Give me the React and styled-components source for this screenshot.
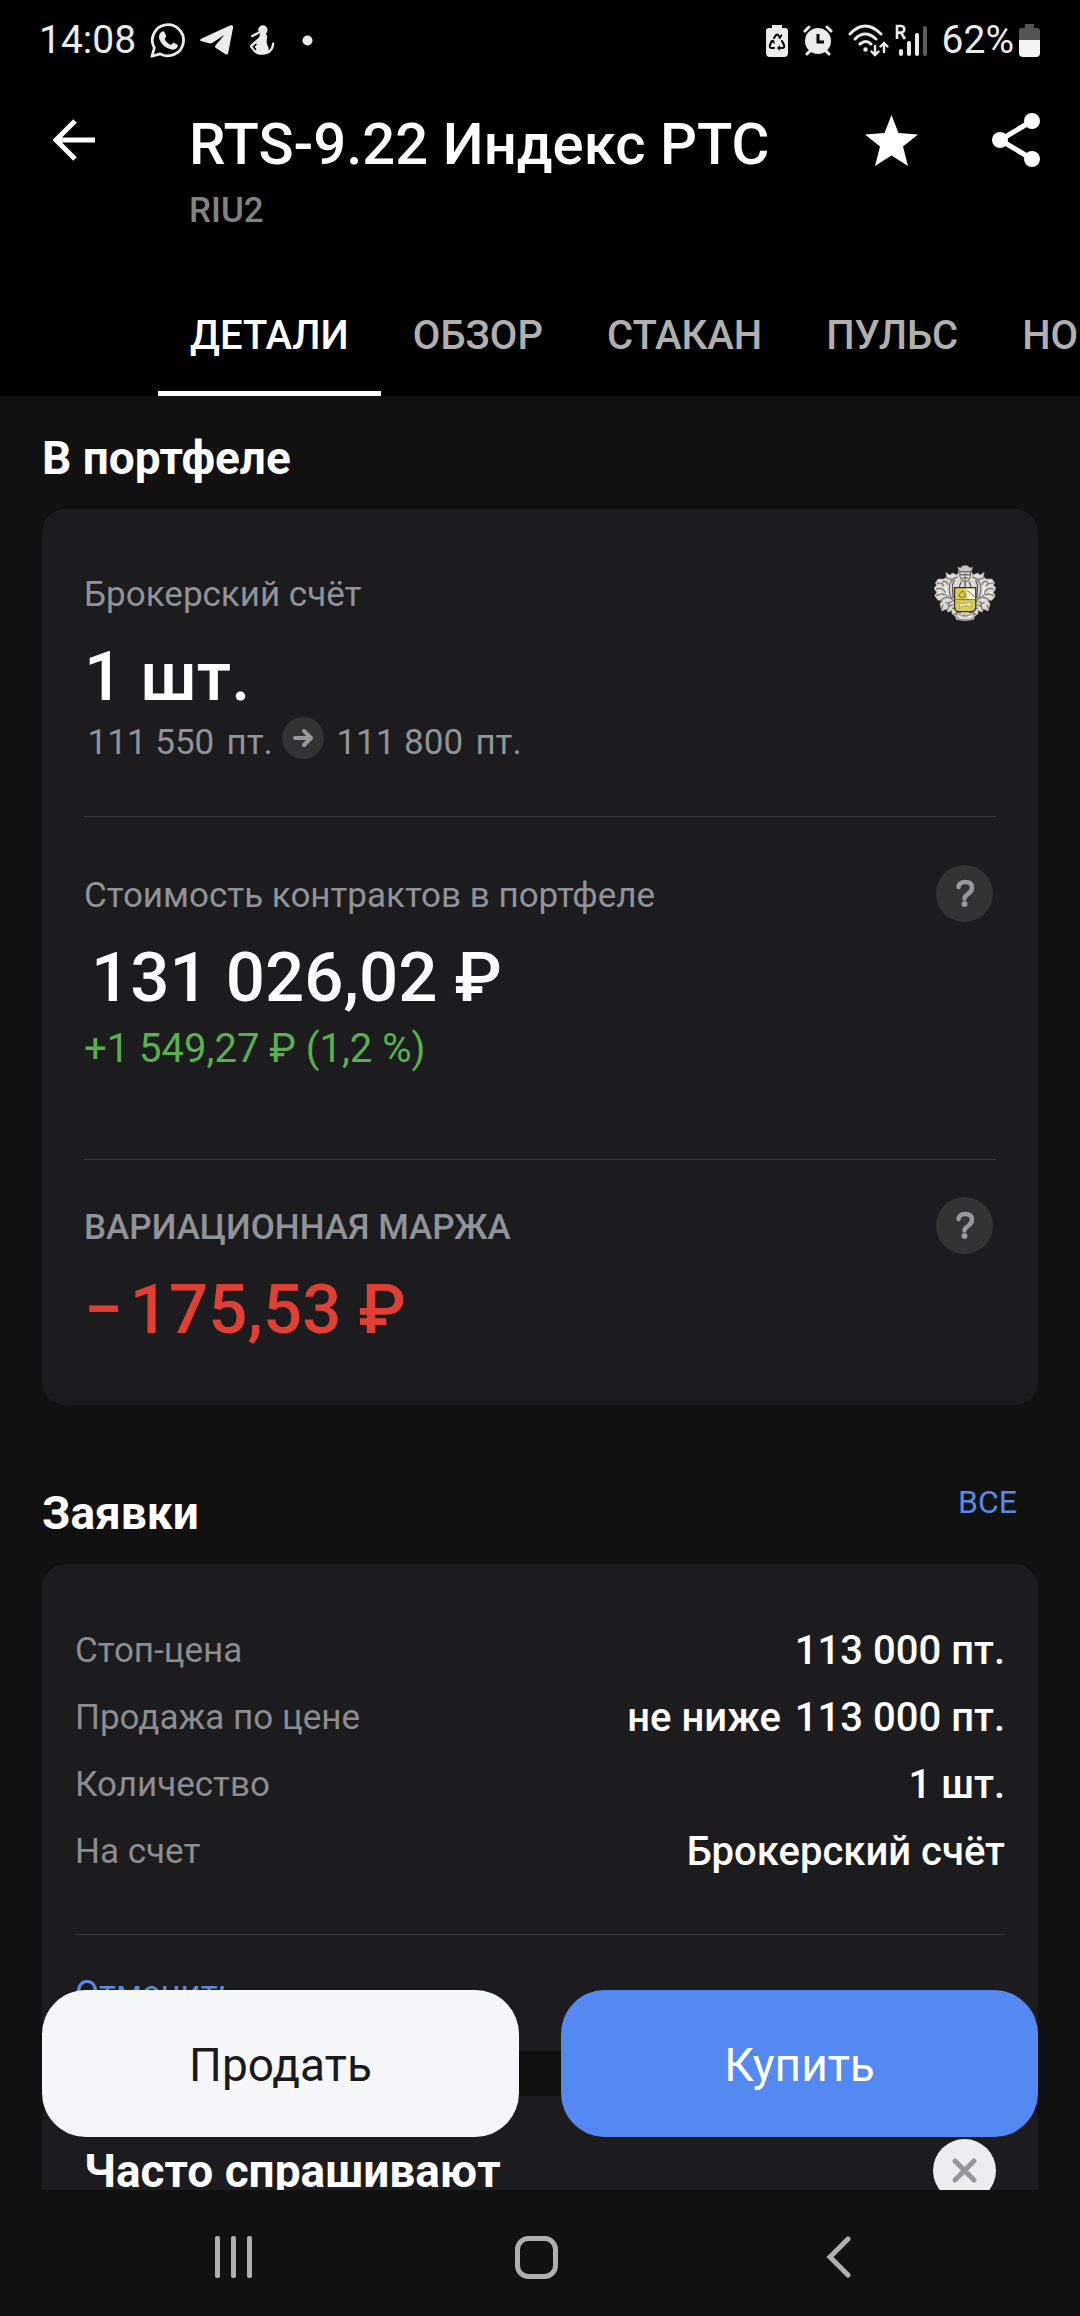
import styled, { createGlobalStyle } from "styled-components";

const GlobalStyle = createGlobalStyle`
    * {
        box-sizing: border-box;
    }
    body {
        margin: 0;
        background-color: #111111;
        color: #ffffff;
        font-family: Roboto, "Noto Sans", sans-serif;
    }
    button {
        margin: 0;
        padding: 0;
        border: none;
        background: none;
        color: inherit;
        font: inherit;
        cursor: pointer;
    }
    h1, h2, p, dl, dt, dd {
        margin: 0;
    }
    svg {
        display: block;
        flex: none;
    }
`;

const Screen = styled.div`
    height: 100vh;
    display: flex;
    flex-direction: column;
`;

/* Header */

const Header = styled.header`
    background-color: #000000;
`;
const StatusBar = styled.div`
    height: 80px;
    padding: 0 39px;
    display: flex;
    align-items: center;
    justify-content: space-between;
    color: #ececec;
    font-size: 39px;
    line-height: 48px;
`;
const StatusGroup = styled.div`
    display: flex;
    align-items: center;
    gap: ${(props) => props.$gap}px;
`;
const AppBar = styled.div`
    display: flex;
    align-items: flex-start;
    padding: 31px 35px 42px 45px;
`;
const IconButton = styled.button`
    width: 58px;
    height: 58px;
    display: flex;
    align-items: center;
    justify-content: center;
`;
const Heading = styled.div`
    flex: 1;
    min-width: 0;
    margin-left: 86px;
`;
const Title = styled.h1`
    font-size: 58px;
    line-height: 66px;
    font-weight: 500;
    white-space: nowrap;
`;
const Ticker = styled.p`
    margin-top: 13px;
    color: #828282;
    font-size: 35px;
    line-height: 42px;
    font-weight: 500;
`;
const Actions = styled.div`
    display: flex;
    gap: 67px;
`;
const Tabs = styled.nav`
    display: flex;
    padding-left: 158px;
    overflow: hidden;
`;
const Tab = styled.button`
    flex: none;
    height: 122px;
    && {
        padding: 2px 32px 0;
        color: ${(props) => (props.$active ? "#ffffff" : "#b0b0b0")};
        font-size: 40px;
        line-height: 48px;
        font-weight: 500;
    }
    box-shadow: ${(props) => (props.$active ? "inset 0 -5px #ffffff" : "none")};
`;

/* Content */

const Body = styled.div`
    position: relative;
    flex: 1;
    min-height: 0;
`;
const Scroll = styled.main`
    height: 100%;
    padding: 35px 42px 0;
    overflow-y: auto;
    scrollbar-width: none;
`;
const SectionHead = styled.div`
    display: flex;
    align-items: flex-start;
    justify-content: space-between;
    margin-bottom: 24px;
`;
const SectionTitle = styled.h2`
    font-size: 46px;
    line-height: 54px;
    font-weight: 700;
`;
const AllLink = styled.a`
    padding: 0 21px;
    color: #5b8ae6;
    font-size: 32px;
    line-height: 32px;
    text-decoration: none;
`;
const Card = styled.section`
    border-radius: 24px;
    background-color: #1c1c1e;
`;
const PortfolioCard = styled(Card)`
    padding: 55px 42px;
    margin-bottom: 81px;
`;
const LabelRow = styled.div`
    height: 57px;
    display: flex;
    align-items: flex-end;
    justify-content: space-between;
    margin-bottom: 16px;
`;
const Label = styled.span`
    color: #909399;
    font-size: 35px;
    line-height: 52px;
    font-weight: ${(props) => (props.$medium ? 500 : 400)};
`;
const HelpButton = styled.button`
    && {
        width: 57px;
        height: 57px;
        border-radius: 50%;
        background-color: #333333;
        color: #96999e;
    }
    margin-right: 3px;
`;
const Value = styled.p`
    color: ${(props) => props.$color || "#ffffff"};
    font-size: 69px;
    line-height: 80px;
    font-weight: 500;
`;
const Prices = styled.div`
    display: flex;
    align-items: flex-end;
    gap: 9px;
    color: #909399;
    font-size: 35px;
    line-height: 32px;
`;
const Gain = styled.p`
    color: #5ab04f;
    font-size: 40px;
    line-height: 62px;
`;
const Divider = styled.hr`
    height: 1px;
    margin: ${(props) => props.$top}px 0 ${(props) => props.$bottom}px;
    border: none;
    background-color: #363638;
`;
const OrderCard = styled(Card)`
    padding: 53px 33px 36px;
    margin-bottom: 45px;
`;
const OrderRow = styled.div`
    display: flex;
    justify-content: space-between;
    line-height: 67px;
    white-space: nowrap;
`;
const OrderName = styled.dt`
    color: #8c8d90;
    font-size: 35px;
`;
const OrderValue = styled.dd`
    font-size: 40px;
    font-weight: 500;
`;
const CancelButton = styled.button`
    && {
        display: block;
        color: #5b8ae6;
        font-size: 35px;
        line-height: 42px;
    }
`;
const FaqCard = styled(Card)`
    display: flex;
    align-items: center;
    justify-content: space-between;
    padding: 43px 42px;
`;
const CloseButton = styled.button`
    && {
        width: 63px;
        height: 63px;
        border-radius: 50%;
        background-color: #ecedef;
        color: #93979c;
    }
`;

/* Trade buttons float over the scrolling list */

const TradeBar = styled.div`
    position: absolute;
    left: 42px;
    right: 42px;
    bottom: 53px;
    display: flex;
    gap: 42px;
`;
const TradeButton = styled.button`
    && {
        flex: 1;
        height: 147px;
        padding-top: 2px;
        border-radius: 44px;
        background-color: ${(props) => (props.$primary ? "#5589f2" : "#f6f7f8")};
        color: ${(props) => (props.$primary ? "#ffffff" : "#1a1a1a")};
        font-size: 46px;
        line-height: 54px;
    }
`;

const SystemNav = styled.nav`
    height: 126px;
    padding: 8px 90px 0 82px;
    display: flex;
    color: #b0b0b0;
`;
const SystemButton = styled.button`
    && {
        flex: 1;
        display: flex;
        align-items: center;
        justify-content: center;
    }
`;

/* Icons */

const WhatsAppIcon = () => (
    <svg width="35" height="36" viewBox="0 0 100 104" fill="none">
        <path d="M5 99 L12 75 A45 45 0 1 1 29 92 Z" stroke="currentColor" strokeWidth="8" strokeLinejoin="round" />
        <path d="M33 28c3-2 6-2 8 1l5 11c1 3-4 7-4 9 3 8 10 14 18 17 2 0 5-6 8-6l10 5c3 1 2 6 0 9-5 6-12 7-19 5-16-4-29-17-33-31-2-7 1-16 7-20z" fill="currentColor" />
    </svg>
);

const TelegramIcon = () => (
    <svg width="35" height="30" viewBox="0 0 100 90" fill="currentColor">
        <path d="M100 6 85 84q-2 6-8 4L47 68q-3-4 1-8L74 29 38 53q-5 3-10 2L3 48q-5-3 1-7L92 1q8-2 8 5z" />
    </svg>
);

const BuddyIcon = () => (
    <svg width="27" height="30" viewBox="0 0 78 90" fill="none">
        <circle cx="43" cy="15" r="14" fill="currentColor" />
        <path d="M34 26c0 6-1 11-7 15L8 58c-6 6-4 8 0 12 6 10 14 18 24 19h16c12-3 16-14 10-26-5-10-4-18-2-24 1-5-1-9-4-13z" fill="currentColor" />
        <path d="M29 24 11 33M54 84c12-4 19-13 20-28" stroke="currentColor" strokeWidth="7" strokeLinecap="round" />
        <path d="m24 57-9 8 7 9" stroke="#000000" strokeWidth="5" />
    </svg>
);

const DotIcon = () => (
    <svg width="11" height="11" viewBox="0 0 11 11">
        <circle cx="5.5" cy="5.5" r="5" fill="currentColor" />
    </svg>
);

const BatterySaverIcon = () => (
    <svg width="22" height="33" viewBox="0 0 22 33">
        <path d="M6 1h10v3h3a3 3 0 0 1 3 3v22a4 4 0 0 1-4 4H4a4 4 0 0 1-4-4V7a3 3 0 0 1 3-3h3z" fill="currentColor" />
        <path d="M8 14l2-3q1-1 2 0l2 3M6 17l-2 4q-1 3 2 3h2M16 17l2 4q1 3-2 3h-3" fill="none" stroke="#000000" strokeWidth="2" strokeLinecap="round" />
        <path d="M12 13h4v-3zM4 17l4-1 1 4zM14 21v6l-3-3z" fill="#000000" />
    </svg>
);

const AlarmIcon = () => (
    <svg width="30" height="31" viewBox="0 0 30 31" fill="none" stroke="currentColor" strokeLinecap="round">
        <circle cx="15" cy="16" r="13" fill="currentColor" stroke="none" />
        <path d="m2 6 4-4M28 6l-4-4" strokeWidth="3" />
        <path d="m7 26-3 3M23 26l3 3" strokeWidth="3" />
        <path d="M15 9v8h6" stroke="#000000" strokeWidth="3" strokeLinecap="butt" />
    </svg>
);

const WifiIcon = () => (
    <svg width="42" height="33" viewBox="0 0 42 33" fill="none" stroke="currentColor" strokeWidth="3" strokeLinecap="round">
        <path d="M2 10Q17-6 33 10M7 15q10-10 21 0M12 20q6-5 11 0" />
        <circle cx="17.5" cy="25.5" r="2.2" fill="currentColor" stroke="none" />
        <path d="M27 22v9M23.500 27.500 27 31l3.500-3.500M36 28v-9M32.500 22.500 36 19l3.500 3.500" strokeWidth="2.400" />
    </svg>
);

const SignalIcon = () => (
    <svg width="32" height="33" viewBox="0 0 32 33" fill="currentColor">
        <path d="M2 15V2h4a3.300 3.300 0 0 1 0 6.600H2m4 0 4 6.400" fill="none" stroke="currentColor" strokeWidth="2.600" />
        <rect x="4" y="25" width="4" height="7" rx="2" />
        <rect x="12" y="17" width="4" height="15" rx="2" />
        <rect x="20" y="9" width="4" height="23" rx="2" />
        <rect x="28" y="2" width="4" height="30" rx="2" fill="#5c5c5c" />
    </svg>
);

const BatteryIcon = () => (
    <svg width="22" height="34" viewBox="0 0 22 34">
        <path d="M6 1h9v4h3a3 3 0 0 1 3 3v9H0V8a3 3 0 0 1 3-3h3z" fill="#555555" />
        <path d="M0 17h21v13a4 4 0 0 1-4 4H4a4 4 0 0 1-4-4z" fill="#f4f4f4" />
    </svg>
);

const BackIcon = () => (
    <svg width="42" height="42" viewBox="0 0 42 42" fill="none" stroke="currentColor" strokeWidth="5">
        <path d="M42 21H3M22 2 3 21l19 19" />
    </svg>
);

const StarIcon = () => (
    <svg width="53" height="51" viewBox="0 0 53 51" fill="currentColor">
        <path d="m26.500 0 7 18L53 19.500 38 31.500 43 51 26.500 40.500 10 51l5-19.500L0 19.500 19.500 18z" />
    </svg>
);

const ShareIcon = () => (
    <svg width="48" height="54" viewBox="0 0 48 54" fill="currentColor">
        <path d="M40 8 8 27l32 19" fill="none" stroke="currentColor" strokeWidth="5" />
        <circle cx="40" cy="8" r="8" />
        <circle cx="8" cy="27" r="8" />
        <circle cx="40" cy="46" r="8" />
    </svg>
);

const QuestionIcon = () => (
    <svg width="57" height="57" viewBox="0 0 57 57" fill="none">
        <path d="M22.500 22q1-5 6.500-5 7 0 7 5.500 0 4-4.500 7-3 2-3 4" stroke="currentColor" strokeWidth="4.500" strokeLinecap="round" />
        <circle cx="28.500" cy="39" r="3" fill="currentColor" />
    </svg>
);

const ArrowBadge = () => (
    <svg width="42" height="42" viewBox="0 0 42 42" fill="none">
        <circle cx="21" cy="21" r="21" fill="#333333" />
        <path d="M13 21h16M22 14l7 7-7 7" stroke="#96999e" strokeWidth="4" strokeLinecap="round" strokeLinejoin="round" />
    </svg>
);

const CloseIcon = () => (
    <svg width="63" height="63" viewBox="0 0 63 63" fill="none" stroke="currentColor" strokeWidth="5" strokeLinecap="round">
        <path d="m22 22 19 19M41 22 22 41" />
    </svg>
);

const CrestHalf = () => (
    <g strokeLinejoin="round">
        <path
            d="M94 16H76L70 30 56 24 48 30 36 22 38 36 30 42 12 42 4 54 8 60 0 70 8 82 2 92 12 106 24 106 18 118 24 138 38 132 42 142 54 136 54 146 64 154 68 164 94 168z"
            fill="#dedbd7"
            stroke="#a9a5a0"
            strokeWidth="2"
        />
        <path
            d="M70 36Q46 44 46 70q0 26 14 40M36 36q6 8 18 6M26 50q12-4 16 8M10 54q14-4 18 8M8 72q14-6 24 6M8 92q12-10 24-2M22 110q2-12 16-12M24 130q2-16 18-16M42 134q0-12 14-14M34 78q0 14 14 22M56 130q10 0 14 14M62 148q8-8 18-4M52 110q-10 4-8 12"
            fill="none"
            stroke="#75716d"
            strokeWidth="4"
            strokeLinecap="round"
        />
        <path d="M62 46q-8 10-6 30l2 24" fill="none" stroke="#5a575a" strokeWidth="4" />
        <path d="M14 50l10 0M12 84l10-2M28 120l6-6M36 66l2 24" fill="none" stroke="#ffffff" strokeWidth="4" />
    </g>
);

const CrestIcon = () => (
    <svg width="62" height="56" viewBox="0 0 187 168">
        <CrestHalf />
        <g transform="matrix(-1 0 0 1 187 0)">
            <CrestHalf />
        </g>
        <path d="M71 6l9 2q6-8 14-8t14 8l9-2-5 14H76z" fill="#c9c6c2" stroke="#77736e" strokeWidth="3" />
        <path d="M78 20h32v14l-7 14H85l-7-14z" fill="#dedbd6" stroke="#5b5855" strokeWidth="3" />
        <path d="M78 29h32M84 39h20M94 24v20" stroke="#77736e" strokeWidth="4" />
        <path d="M82 50 76 66M106 50l6 16M94 48v18" stroke="#67635e" strokeWidth="4" />
        <path d="M62 68h64v58q0 14-14 14H76q-14 0-14-14z" fill="#dccb55" />
        <path d="M96 70h28v32H102z" fill="#f4f2ea" />
        <path d="M62 68h64v58q0 14-14 14H76q-14 0-14-14z" fill="none" stroke="#38342b" strokeWidth="4" />
        <path d="M62 104h64" stroke="#8a7c3a" strokeWidth="3" />
        <path d="M74 94l6-12 8-4 8 14-10 6zM100 78l8 4 14 14" fill="none" stroke="#7b6e35" strokeWidth="3" />
        <path d="M72 112l10 4h16l12-6 4 20-12-8-18 2-10 8 4-12z" fill="#f3edbf" stroke="#96884a" strokeWidth="2" />
        <path d="M66 146q28 12 56 0l-6 15q-22 8-44 0z" fill="#eeece8" stroke="#85817c" strokeWidth="3" />
        <path d="M84 152l10 6 10-6" fill="none" stroke="#85817c" strokeWidth="3" />
    </svg>
);

const RecentsIcon = () => (
    <svg width="39" height="42" viewBox="0 0 39 42" fill="currentColor">
        <rect x="1" width="5" height="42" rx="2" />
        <rect x="17" width="5" height="42" rx="2" />
        <rect x="33" width="5" height="42" rx="2" />
    </svg>
);

const HomeIcon = () => (
    <svg width="43" height="43" viewBox="0 0 43 43" fill="none" stroke="currentColor" strokeWidth="5">
        <rect x="2.500" y="2.500" width="38" height="38" rx="11" />
    </svg>
);

const NavBackIcon = () => (
    <svg width="25" height="42" viewBox="0 0 25 42" fill="none" stroke="currentColor" strokeWidth="5" strokeLinecap="round">
        <path d="M22 3 4 21l18 18" />
    </svg>
);

const HAIR = "\u200A";

const tabs = ["ДЕТАЛИ", "ОБЗОР", "СТАКАН", "ПУЛЬС", "НОВОСТИ"];

const order = [
    { name: "Стоп-цена", value: "113 000 пт." },
    { name: "Продажа по цене", value: `не ниже ${HAIR}113 000 пт.` },
    { name: "Количество", value: "1 шт." },
    { name: "На счет", value: "Брокерский счёт" },
];

const App = () => {
    return (
        <Screen>
            <GlobalStyle />
            <Header>
                <StatusBar>
                    <StatusGroup $gap={14}>
                        <span>14:08</span>
                        <WhatsAppIcon />
                        <TelegramIcon />
                        <StatusGroup $gap={27}>
                            <BuddyIcon />
                            <DotIcon />
                        </StatusGroup>
                    </StatusGroup>
                    <StatusGroup $gap={15}>
                        <BatterySaverIcon />
                        <AlarmIcon />
                        <StatusGroup $gap={5}>
                            <WifiIcon />
                            <SignalIcon />
                        </StatusGroup>
                        <StatusGroup $gap={5}>
                            <span>62%</span>
                            <BatteryIcon />
                        </StatusGroup>
                    </StatusGroup>
                </StatusBar>
                <AppBar>
                    <IconButton aria-label="Назад">
                        <BackIcon />
                    </IconButton>
                    <Heading>
                        <Title>RTS-9.22 Индекс РТС</Title>
                        <Ticker>RIU2</Ticker>
                    </Heading>
                    <Actions>
                        <IconButton aria-label="В избранное">
                            <StarIcon />
                        </IconButton>
                        <IconButton aria-label="Поделиться">
                            <ShareIcon />
                        </IconButton>
                    </Actions>
                </AppBar>
                <Tabs>
                    {tabs.map((tab, i) => (
                        <Tab key={tab} $active={i === 0}>
                            {tab}
                        </Tab>
                    ))}
                </Tabs>
            </Header>
            <Body>
                <Scroll>
                    <SectionHead>
                        <SectionTitle>В портфеле</SectionTitle>
                    </SectionHead>
                    <PortfolioCard>
                        <LabelRow>
                            <Label>Брокерский счёт</Label>
                            <CrestIcon />
                        </LabelRow>
                        <Value>1 шт.</Value>
                        <Prices>
                            <span>{HAIR}111 550{HAIR} пт.</span>
                            <ArrowBadge />
                            <span>{HAIR}111 800{HAIR} пт.</span>
                        </Prices>
                        <Divider $top={57} $bottom={48} />
                        <LabelRow>
                            <Label>Стоимость контрактов в портфеле</Label>
                            <HelpButton aria-label="Подробнее о стоимости">
                                <QuestionIcon />
                            </HelpButton>
                        </LabelRow>
                        <Value>{HAIR}131 026,02 ₽</Value>
                        <Gain>+1 549,27 ₽ (1,2 %)</Gain>
                        <Divider $top={79} $bottom={37} />
                        <LabelRow>
                            <Label $medium>ВАРИАЦИОННАЯ МАРЖА</Label>
                            <HelpButton aria-label="Подробнее о марже">
                                <QuestionIcon />
                            </HelpButton>
                        </LabelRow>
                        <Value $color="#e03f36">−{HAIR}175,53 ₽</Value>
                    </PortfolioCard>
                    <SectionHead>
                        <SectionTitle>Заявки</SectionTitle>
                        <AllLink href="#orders">ВСЕ</AllLink>
                    </SectionHead>
                    <OrderCard id="orders">
                        <dl>
                            {order.map((item) => (
                                <OrderRow key={item.name}>
                                    <OrderName>{item.name}</OrderName>
                                    <OrderValue>{item.value}</OrderValue>
                                </OrderRow>
                            ))}
                        </dl>
                        <Divider $top={49} $bottom={38} />
                        <CancelButton>Отменить</CancelButton>
                    </OrderCard>
                    <FaqCard>
                        <SectionTitle>Часто спрашивают</SectionTitle>
                        <CloseButton aria-label="Закрыть">
                            <CloseIcon />
                        </CloseButton>
                    </FaqCard>
                </Scroll>
                <TradeBar>
                    <TradeButton>Продать</TradeButton>
                    <TradeButton $primary>Купить</TradeButton>
                </TradeBar>
            </Body>
            <SystemNav>
                <SystemButton aria-label="Недавние">
                    <RecentsIcon />
                </SystemButton>
                <SystemButton aria-label="Домой">
                    <HomeIcon />
                </SystemButton>
                <SystemButton aria-label="Назад">
                    <NavBackIcon />
                </SystemButton>
            </SystemNav>
        </Screen>
    );
};

export default App;
